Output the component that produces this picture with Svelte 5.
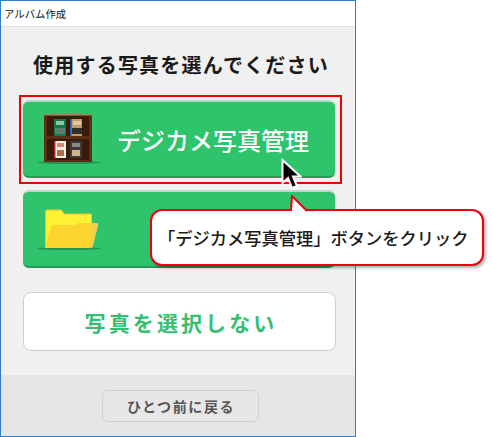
<svelte:options runes={true} />

<div class="page">
  <div class="window">
    <div class="titlebar">アルバム作成</div>
    <main class="content">
      <h1>使用する写真を選んでください</h1>
      <div class="choices">
        <button class="choice">
          <svg class="icon" viewBox="0 0 66 50" width="66" height="50">
            <ellipse cx="32" cy="48.500" rx="32" ry="1.500" fill="#23934f" />
            <rect x="7" y="0" width="48" height="48" fill="#5a3015" />
            <rect x="7" y="0" width="48" height="1.500" fill="#a9805c" />
            <rect x="10" y="2" width="42" height="20" fill="#3a1a08" />
            <rect x="10" y="25" width="42" height="21" fill="#3a1a08" />
            <rect x="17" y="5" width="12" height="17" fill="#0e7a45" />
            <rect x="19" y="7" width="8" height="4" fill="#8cc4a4" />
            <rect x="18" y="14" width="10" height="6" fill="#5f7c72" />
            <rect x="33" y="5" width="1.500" height="17" fill="#2a5db0" />
            <rect x="34.500" y="5" width="10.500" height="17" fill="#c09a68" />
            <rect x="36" y="7" width="8" height="4" fill="#dcc6a4" />
            <rect x="35" y="14" width="10" height="6" fill="#33302c" />
            <rect x="17" y="27" width="12" height="17" fill="#f6efe4" />
            <rect x="17" y="27" width="1.500" height="17" fill="#c8202a" />
            <rect x="20" y="29" width="7" height="4" fill="#d08a80" />
            <rect x="20" y="36" width="7" height="6" fill="#a8704f" />
            <rect x="33" y="27" width="12" height="17" fill="#3a3a3a" />
            <rect x="35" y="29" width="8" height="4" fill="#8a8a8a" />
            <rect x="35" y="36" width="8" height="6" fill="#c9b48c" />
          </svg>
          <span>デジカメ写真管理</span>
        </button>
        <button class="choice">
          <svg class="icon" viewBox="0 0 66 50" width="66" height="50">
            <ellipse cx="32" cy="44.500" rx="32" ry="1.500" fill="#23934f" />
            <path d="M8.500 43V8q0-2 2-2h13q2 0 2.500 2l1 2h27.500v33z" fill="#fff134" stroke="#ecc32e" />
            <path d="M8 44 14 23q.5-2 2.500-2h22l2.500-2h18q2.500 0 2 2.500L56 42q-.5 2-2.500 2z" fill="#fdd531" />
            <path d="M55 44.500 61 21q.5-2-2-2h-3l-1 25z" fill="#e6cf5c" opacity=".75" />
          </svg>
        </button>
      </div>
      <button class="skip">写真を選択しない</button>
    </main>
    <footer class="footer">
      <button class="back">ひとつ前に戻る</button>
    </footer>
  </div>

  <div class="highlight"></div>

  <svg class="cursor" viewBox="0 0 22 34" width="22" height="34">
    <path d="M2.500 2V25L8 20l4 10 5-2-4-9.500h7.500z" fill="#000" stroke="#fff" stroke-width="2" />
  </svg>

  <div class="callout">
    <svg class="tail" viewBox="0 0 24 20" width="24" height="20">
      <path d="M1 16 2 1 17 16" fill="#fff" stroke="#ee0010" stroke-width="2" />
    </svg>
    「デジカメ写真管理」ボタンをクリック
  </div>
</div>

<style>
  :global(body) {
    margin: 0;
    background: #fff;
  }

  .page {
    position: relative;
    width: 492px;
    height: 437px;
    overflow: hidden;
    font-family: "Noto Sans CJK JP", "Noto Sans", sans-serif;
  }

  .window {
    box-sizing: border-box;
    display: flex;
    flex-direction: column;
    width: 356px;
    height: 437px;
    border: 1px solid #2b7fd0;
    background: #f0f0f0;
  }

  .titlebar {
    box-sizing: border-box;
    height: 26px;
    padding: 4px 3px 0;
    background: #fff;
    border-bottom: 1px solid #e3e3e3;
    font-size: 10.400px;
    line-height: 18px;
    color: #111;
  }

  .content {
    flex: 1;
    display: flex;
    flex-direction: column;
    align-items: center;
    padding-left: 2px;
  }

  h1 {
    margin: 22px 0 0 4px;
    height: 32px;
    font-size: 20px;
    line-height: 32px;
    font-weight: 700;
    letter-spacing: 1.200px;
    color: #1a1a1a;
  }

  .choices {
    display: flex;
    flex-direction: column;
    gap: 12px;
    margin-top: 19px;
  }

  button {
    font-family: inherit;
    padding: 0;
    cursor: pointer;
  }

  .choice {
    box-sizing: border-box;
    display: flex;
    align-items: center;
    gap: 14px;
    width: 312px;
    height: 78px;
    padding: 0 0 0 14px;
    border: 0;
    border-top: 2px solid #c3d3c8;
    border-bottom: 2px solid #259a57;
    border-radius: 6px;
    background: #2fc36c;
    color: #fff;
    font-size: 24px;
    font-weight: 500;
  }

  .icon {
    flex: none;
  }

  .skip {
    box-sizing: border-box;
    width: 313px;
    height: 59px;
    margin-top: 24px;
    padding-left: 4px;
    border: 1px solid #cfcfcf;
    border-radius: 8px;
    background: #fff;
    color: #36bf72;
    font-size: 21px;
    font-weight: 700;
    letter-spacing: 3.100px;
  }

  .footer {
    display: flex;
    justify-content: center;
    box-sizing: border-box;
    height: 61px;
    padding: 15px 0 0 4px;
    background: #e5e5e5;
  }

  .back {
    box-sizing: border-box;
    width: 157px;
    height: 32px;
    padding-left: 2px;
    border: 1px solid #d0d0d0;
    border-radius: 6px;
    background: #e7e7e7;
    color: #555;
    font-size: 14px;
    font-weight: 700;
    letter-spacing: 1.600px;
  }

  .highlight {
    position: absolute;
    left: 19px;
    top: 95px;
    box-sizing: border-box;
    width: 323px;
    height: 89px;
    border: 2px solid #f00000;
  }

  .cursor {
    position: absolute;
    left: 280px;
    top: 158px;
  }

  .callout {
    position: absolute;
    left: 150px;
    top: 209px;
    box-sizing: border-box;
    width: 334px;
    height: 57px;
    padding-left: 6px;
    border: 2px solid #ee0010;
    border-radius: 12px;
    background: #fff;
    box-shadow: 2px 2px 3px rgba(0, 0, 0, 0.3);
    color: #1a1a1a;
    font-size: 17.250px;
    font-weight: 500;
    line-height: 53px;
    white-space: nowrap;
  }

  .tail {
    position: absolute;
    left: 138px;
    top: -16px;
  }
</style>
